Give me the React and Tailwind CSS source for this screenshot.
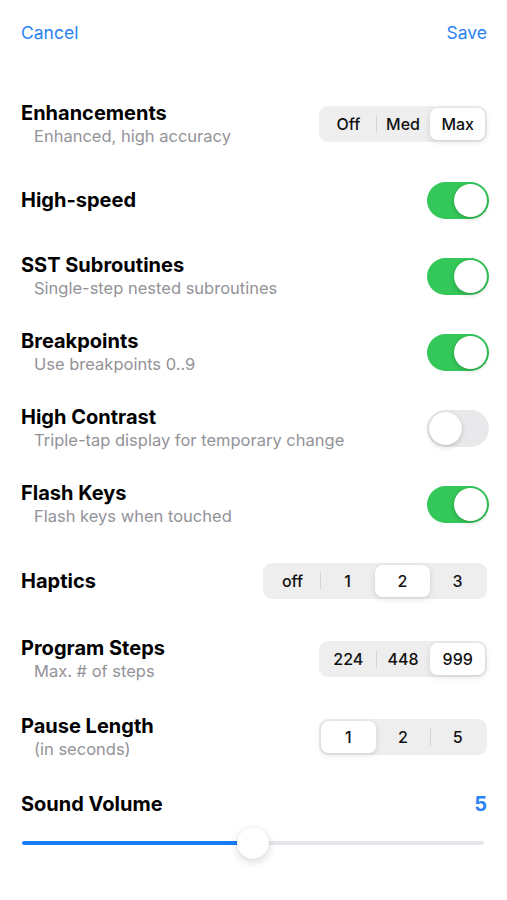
import React from "react";

const font = { fontFamily: "Inter, 'Liberation Sans', sans-serif" };

function Toggle({ on }) {
  return (
    <div
      className={`-mr-[2px] flex h-[37px] w-[62px] shrink-0 items-center rounded-full p-[2px] ${
        on ? "justify-end bg-[#34c759]" : "justify-start bg-[#e9e9eb]"
      }`}
    >
      <div className="h-[33px] w-[33px] rounded-full bg-white shadow-[0_2px_5px_rgba(0,0,0,0.18),0_0_1px_rgba(0,0,0,0.1)]" />
    </div>
  );
}

function Segmented({ items, selected, width }) {
  return (
    <div
      className="flex h-[36px] shrink-0 items-center rounded-[9px] bg-[#eeeeef] p-[2px]"
      style={{ width }}
    >
      {items.map((it, i) => {
        const isSel = i === selected;
        const showDivider = i > 0 && i !== selected && i - 1 !== selected;
        return (
          <div key={i} className="relative flex h-full flex-1 items-center justify-center">
            {showDivider && (
              <div className="absolute left-0 top-1/2 h-[17px] w-px -translate-y-1/2 bg-[#d3d3d6]" />
            )}
            <div
              className={`flex h-full w-full items-center justify-center rounded-[7px] text-[16px] font-medium text-[#111]  ${
                isSel ? "bg-white shadow-[0_2px_6px_rgba(0,0,0,0.12),0_0_1px_rgba(0,0,0,0.1)]" : ""
              }`}
            >
              {it}
            </div>
          </div>
        );
      })}
    </div>
  );
}

function Row({ title, subtitle, children, h = "h-[76px]" }) {
  return (
    <div className={`flex ${h} items-center justify-between`}>
      <div className="flex flex-col">
        <div className="text-[20px] font-bold leading-[24px] text-black">{title}</div>
        {subtitle && (
          <div className="pl-[13px] text-[16.5px] leading-[22px] text-[#939398]">{subtitle}</div>
        )}
      </div>
      {children}
    </div>
  );
}

export default function App() {
  return (
    <div className="min-h-[900px] w-full bg-white pl-[21px] pr-[20px]" style={font}>
      <div className="flex h-[66px] items-center justify-between text-[17.5px] text-[#2a82f2]">
        <span>Cancel</span>
        <span>Save</span>
      </div>
      <div className="mt-[20px]">
        <Row title="Enhancements" subtitle="Enhanced, high accuracy">
          <Segmented items={["Off", "Med", "Max"]} selected={2} width={168} />
        </Row>
        <Row title="High-speed">
          <Toggle on />
        </Row>
        <Row title="SST Subroutines" subtitle="Single-step nested subroutines">
          <Toggle on />
        </Row>
        <Row title="Breakpoints" subtitle="Use breakpoints 0..9">
          <Toggle on />
        </Row>
        <Row title="High Contrast" subtitle="Triple-tap display for temporary change">
          <Toggle on={false} />
        </Row>
        <Row title="Flash Keys" subtitle="Flash keys when touched">
          <Toggle on />
        </Row>
        <Row title="Haptics" h="h-[78px]">
          <Segmented items={["off", "1", "2", "3"]} selected={2} width={224} />
        </Row>
        <Row title="Program Steps" subtitle="Max. # of steps" h="h-[78px]">
          <Segmented items={["224", "448", "999"]} selected={2} width={168} />
        </Row>
        <Row title="Pause Length" subtitle="(in seconds)" h="h-[78px]">
          <Segmented items={["1", "2", "5"]} selected={0} width={168} />
        </Row>
      </div>
      <div className="mt-[16px] flex items-center justify-between">
        <div className="text-[20px] font-bold leading-[24px] text-black">Sound Volume</div>
        <div className="text-[20px] font-bold leading-[24px] text-[#2a82f2]">5</div>
      </div>
      <div className="relative ml-[1px] mr-[3px] mt-[10px] flex h-[34px] items-center">
        <div className="h-[4px] w-full rounded-full bg-[#e5e5ea]">
          <div className="h-full w-1/2 rounded-full bg-[#1a7cf5]" />
        </div>
        <div className="absolute left-1/2 top-1/2 h-[32px] w-[32px] -translate-x-1/2 -translate-y-1/2 rounded-full bg-white shadow-[0_3px_8px_rgba(0,0,0,0.15),0_0_1px_rgba(0,0,0,0.15)]" />
      </div>
    </div>
  );
}
